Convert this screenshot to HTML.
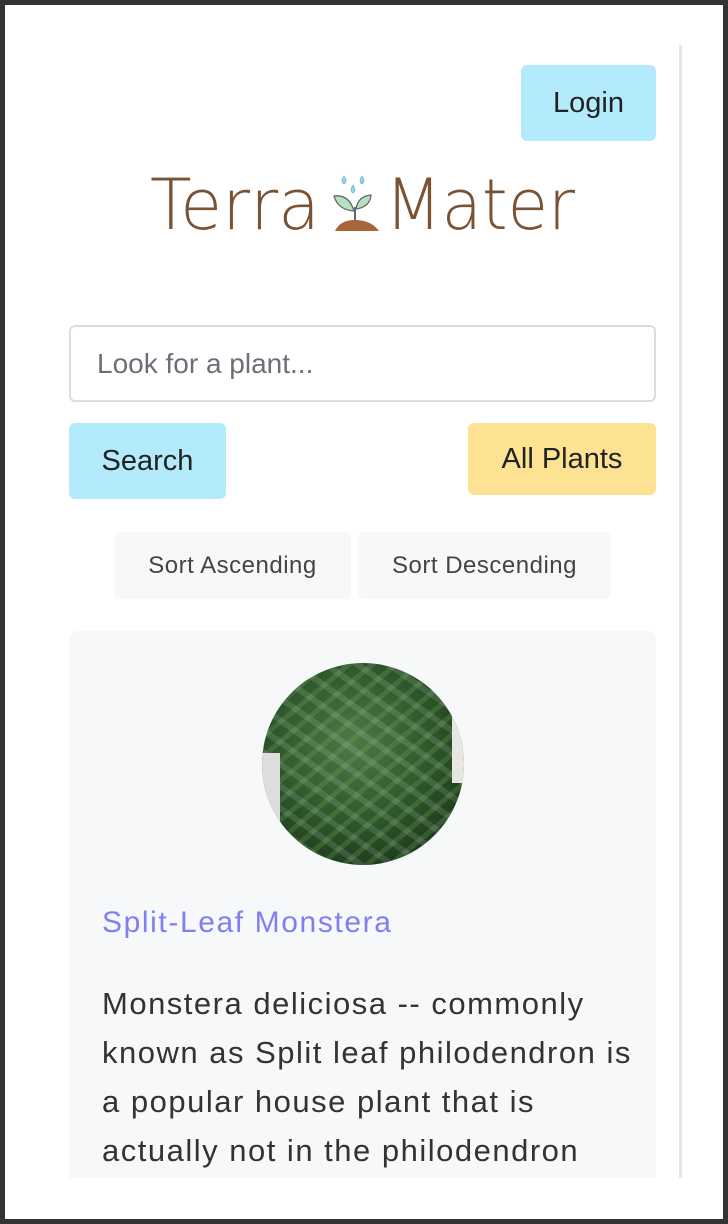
<!DOCTYPE html>
<html><head><meta charset="utf-8"><style>
*{margin:0;padding:0;box-sizing:border-box}
html,body{width:728px;height:1224px;background:#333;overflow:hidden;font-family:"Liberation Sans",sans-serif}
#frame{position:absolute;left:5px;top:5px;width:718px;height:1214px;background:#fff;overflow:hidden}
.abs{position:absolute}
.btn{position:absolute;border-radius:6px;display:flex;align-items:center;justify-content:center;color:#222}
</style></head><body>
<div id="frame">
<div class="abs" style="left:674px;top:40px;width:3px;height:1133px;background:#e6e6e6"></div>
<div class="btn" style="left:516px;top:60px;width:135px;height:76px;background:#b3ebfd;font-size:29px">Login</div>
<svg class="abs" style="left:0;top:150px" width="718" height="90" viewBox="0 150 718 90">
<text x="145" y="224" font-family="DejaVu Sans ExtraLight, DejaVu Sans, sans-serif" font-weight="200" font-size="70" fill="#7a5234" textLength="170" lengthAdjust="spacingAndGlyphs">Terra</text>
<text x="380" y="224" font-family="DejaVu Sans ExtraLight, DejaVu Sans, sans-serif" font-weight="200" font-size="70" fill="#7a5234" textLength="190" lengthAdjust="spacingAndGlyphs">Mater</text>
<g transform="translate(327,170)">
<path d="M12 1 Q8 7 12 9 Q16 7 12 1Z M30 1 Q26 7 30 9 Q34 7 30 1Z M21 10 Q17 16 21 18 Q25 16 21 10Z" fill="#8fd6ec" stroke="#6aa" stroke-width=".6"/>
<path d="M23 47 L23 32" stroke="#667" stroke-width="2"/>
<path d="M22 36 Q6 35 2 21 Q17 19 22 36Z" fill="#b7e0c0" stroke="#666" stroke-width="1.3"/>
<path d="M24 34 Q26 21 39 20 Q38 32 24 34Z" fill="#b7e0c0" stroke="#666" stroke-width="1.3"/>
<path d="M3 56 Q8 45 23 45 Q39 45 47 56Z" fill="#a8673a"/>
</g>
</svg>
<div class="abs" style="left:64px;top:320px;width:587px;height:77px;border:2px solid #dcdde0;border-radius:6px;padding-left:26px;display:flex;align-items:center;font-size:28px;color:#6b7078">Look for a plant...</div>
<div class="btn" style="left:64px;top:418px;width:157px;height:76px;background:#b3ebfd;font-size:29px">Search</div>
<div class="btn" style="left:463px;top:418px;width:188px;height:72px;background:#fde293;font-size:29px">All Plants</div>
<div class="btn" style="left:109px;top:527px;width:237px;height:67px;background:#f7f8fa;font-size:24px;color:#444;letter-spacing:.5px">Sort Ascending</div>
<div class="btn" style="left:353px;top:527px;width:253px;height:67px;background:#f7f8fa;font-size:24px;color:#444;letter-spacing:.5px">Sort Descending</div>
<div class="abs" style="left:64px;top:626px;width:587px;height:560px;background:#f7f8fa;border-radius:8px"></div>
<div class="abs" style="left:257px;top:658px;width:202px;height:202px;border-radius:50%;overflow:hidden;background:radial-gradient(circle at 45% 40%,#4d7a45 0%,#2f5a2c 45%,#1f3d1d 75%,#6d7d62 100%)">
<div class="abs" style="left:0;top:0;width:202px;height:202px;background:repeating-linear-gradient(35deg,rgba(255,255,255,.12) 0 6px,transparent 6px 18px),repeating-linear-gradient(-40deg,rgba(120,170,100,.25) 0 5px,transparent 5px 15px)"></div>
<div class="abs" style="left:0;top:90px;width:18px;height:112px;background:#ddd"></div>
<div class="abs" style="left:190px;top:40px;width:14px;height:80px;background:#e8e6e0"></div>
</div>
<div class="abs" style="left:97px;top:901px;font-size:30px;color:#7f80f0;letter-spacing:1.6px">Split-Leaf Monstera</div>
<div class="abs" style="left:97px;top:974px;width:570px;font-size:31px;line-height:49px;color:#333;letter-spacing:1.5px;white-space:nowrap">Monstera deliciosa -- commonly<br>known as Split leaf philodendron is<br>a popular house plant that is<br>actually not in the philodendron</div>
<div class="abs" style="left:0;top:1173px;width:718px;height:50px;background:#fff"></div>
</div>
</body></html>
